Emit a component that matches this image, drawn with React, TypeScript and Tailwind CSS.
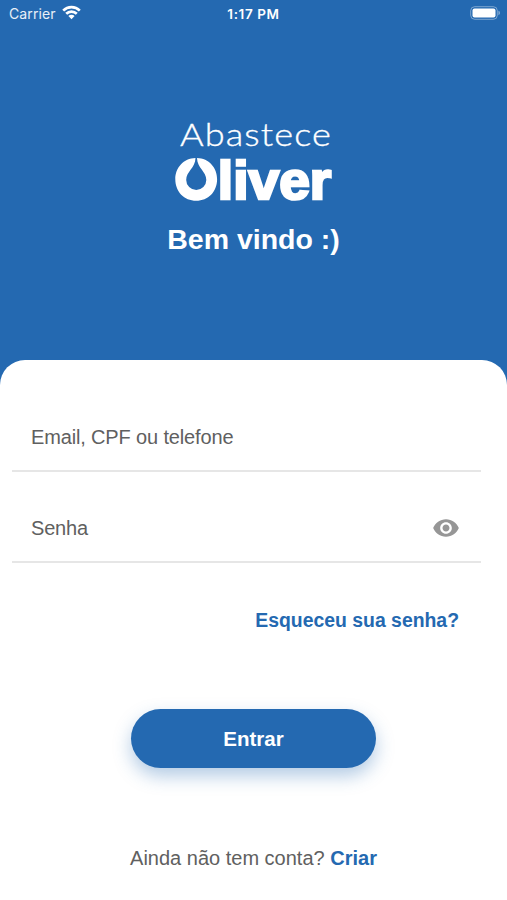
import { useState } from "react";

function StatusBar() {
  return (
    <div className="grid h-7 grid-cols-3 items-center pl-[9px] pr-[6px] text-white">
      <div className="flex items-center gap-[6px]">
        <span className="font-['Inter'] text-[14px] leading-7 tracking-[0.1px] text-white/90">Carrier</span>
        <svg className="-mt-[3px]" width="19" height="15" viewBox="0 0 19 15" fill="none" stroke="currentColor" strokeWidth="2.7">
          <path d="M1.2 5.6a11.8 11.8 0 0 1 16.6 0" />
          <path d="M4.2 8.8a7.6 7.6 0 0 1 10.6 0" />
          <path d="M9.5 14.2 6.4 11a4.4 4.4 0 0 1 6.2 0Z" fill="currentColor" stroke="none" />
        </svg>
      </div>
      <span className="-ml-[3px] text-center font-['Inter'] text-[13.5px] font-semibold leading-7 tracking-[0.6px]">1:17 PM</span>
      <svg className="-mt-[2px] justify-self-end" width="31" height="14" viewBox="0 0 31 14">
        <rect x="0.7" y="0.7" width="26.6" height="12.6" rx="4" fill="none" stroke="#fff" strokeOpacity="0.4" />
        <rect x="2.5" y="2.5" width="23" height="9" rx="2" fill="#fff" />
        <path d="M28.5 4.8c1.8.6 1.8 3.8 0 4.4Z" fill="#fff" fillOpacity="0.5" />
      </svg>
    </div>
  );
}

function Logo() {
  return (
    <svg className="overflow-visible" width="160" height="86" viewBox="0 0 160 86" fill="#fff">
      <text
        x="6"
        y="27.5"
        textLength="152"
        lengthAdjust="spacingAndGlyphs"
        className="font-['Lato'] text-[32px] font-light tracking-[1px]"
        stroke="#fff"
        strokeWidth="0.35"
      >
        Abastece
      </text>
      {/* "O" com a gota no centro */}
      <path d="M21.500 40C9.500 40.400 1.300 49.600 1.300 61.200c0 12.400 8.800 21.500 20.900 21.500S43.100 73.600 43.100 61.200C43.100 49.600 35 40.400 23 40c.2 10.200 9.300 13.400 9.300 21.900a10.050 10.050 0 0 1-20.100 0c0-8.500 9.100-11.700 9.300-21.900Z" />
      <text
        x="43.8"
        y="80.5"
        textLength="113.5"
        lengthAdjust="spacingAndGlyphs"
        className="text-[53px] font-bold"
        stroke="#fff"
        strokeWidth="2.600"
      >
        liver
      </text>
    </svg>
  );
}

export default function App() {
  const [visible, setVisible] = useState(false);

  return (
    <div className="flex h-[900px] w-full flex-col overflow-hidden bg-[#2469b1] font-['Liberation_Sans',sans-serif]">
      <StatusBar />

      <header className="flex h-[332px] shrink-0 flex-col items-center pt-[90px]">
        <Logo />
        <h1 className="mt-[17px] text-[28.5px] font-bold leading-9 text-white">Bem vindo :)</h1>
      </header>

      <main className="flex flex-1 flex-col rounded-t-[25px] bg-white">
        <div className="ml-3 mr-[26px] mt-11 flex h-[68px] items-center border-b-2 border-[#e6e6e6] px-[19px]">
          <input
            className="-mt-px w-full text-[20px] tracking-[-0.15px] text-[#606060] outline-none placeholder:text-[#606060] placeholder:opacity-100"
            placeholder="Email, CPF ou telefone"
          />
        </div>
        <div className="ml-3 mr-[26px] mt-[23px] flex h-[68px] items-center border-b-2 border-[#e6e6e6] pl-[19px] pr-[21px]">
          <input
            type={visible ? "text" : "password"}
            className="-mt-px min-w-0 flex-1 text-[20px] tracking-[-0.2px] text-[#606060] outline-none placeholder:text-[#606060] placeholder:opacity-100"
            placeholder="Senha"
          />
          <button type="button" aria-label="Mostrar senha" className="-mt-px" onClick={() => setVisible(!visible)}>
            <svg width="28" height="28" viewBox="0 0 24 24" fill="#969696">
              <path d="M12 4.500C7 4.500 2.730 7.610 1 12c1.730 4.390 6 7.500 11 7.500s9.270-3.110 11-7.500c-1.730-4.390-6-7.500-11-7.500zM12 17c-2.760 0-5-2.240-5-5s2.240-5 5-5 5 2.240 5 5-2.240 5-5 5zm0-8c-1.660 0-3 1.340-3 3s1.340 3 3 3 3-1.340 3-3-1.340-3-3-3z" />
            </svg>
          </button>
        </div>

        <a href="#" className="mr-12 mt-[43px] self-end text-[19.4px] font-bold leading-7 text-[#2469b1]">
          Esqueceu sua senha?
        </a>

        <button
          type="button"
          className="mt-[75px] h-[59px] w-[245px] self-center rounded-full bg-[#2469b1] pt-[2px] text-[20.5px] font-bold text-white shadow-[0_8px_18px_rgba(36,105,177,0.35)]"
        >
          Entrar
        </button>

        <p className="mt-[76px] text-center text-[20px] leading-7 text-[#606060]">
          Ainda não tem conta?{" "}
          <a href="#" className="font-bold text-[#2469b1]">
            Criar
          </a>
        </p>
      </main>
    </div>
  );
}
